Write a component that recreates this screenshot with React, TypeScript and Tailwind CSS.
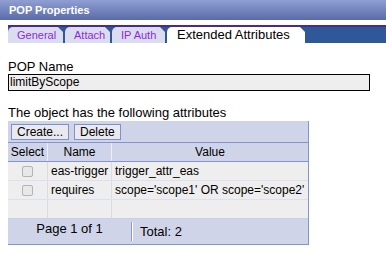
import React from 'react'

const tabNotch = '[clip-path:polygon(0_0,calc(100%-5px)_0,100%_5px,100%_100%,0_100%)]'

function Tab({ label, width, active }: { label: string; width: string; active?: boolean }) {
  return (
    <div
      className={`${width} ${tabNotch} h-[16px] rounded-tl-[5px] ${
        active
          ? 'bg-white text-black text-[13px] pl-[10px]'
          : 'bg-[#dcdcf0] text-[#8a2be2] text-[11px] pl-[9px]'
      } leading-[16px] whitespace-nowrap`}
    >
      {label}
    </div>
  )
}

function Checkbox() {
  return <div className="mx-auto mt-[4px] h-[11px] w-[11px] rounded-[2px] border border-[#b3b3b3] bg-[#e8e8e8]" />
}

const rows = [
  { name: 'eas-trigger', value: 'trigger_attr_eas' },
  { name: 'requires', value: "scope='scope1' OR scope='scope2'" },
]

export default function App() {
  return (
    <div className="h-[271px] w-[386px] overflow-hidden bg-white text-black font-['Liberation_Sans',Arial,sans-serif]">
      <div className="h-[20px] bg-gradient-to-b from-[#909fd3] to-[#5a6ba8] pl-[9px] text-[11px] font-bold leading-[20px] text-white">
        POP Properties
      </div>

      <div className="pl-[8px] pt-[5px]">
        <div className="h-[2px] bg-[#4a2b8a]" />
        <div className="flex h-[16px] gap-[2px] bg-[#2f5898]">
          <Tab label="General" width="w-[55px]" />
          <Tab label="Attach" width="w-[45px]" />
          <Tab label="IP Auth" width="w-[53px]" />
          <Tab label="Extended Attributes" width="w-[138px]" active />
        </div>

        <div className="mt-[16px] text-[13px] leading-[15px]">POP Name</div>
        <div className="h-[17px] w-[362px] border border-black bg-[#eeeeee] pl-[1px] text-[12px] leading-[15px]">
          limitByScope
        </div>

        <div className="mt-[14px] text-[13px] leading-[15px]">The object has the following attributes</div>

        <div className="mt-[1px] w-[301px] border-r border-b border-[#8393d6] text-[12px]">
          <div className="flex h-[22px] gap-[5px] border-b border-[#8393d6] bg-[#cfd4e8] pl-[3px] pt-[3px]">
            <div className="h-[16px] border border-[#7f92c6] bg-[#e9e9ef] px-[5px] leading-[14px]">Create...</div>
            <div className="h-[16px] border border-[#7f92c6] bg-[#e9e9ef] px-[5px] leading-[14px]">Delete</div>
          </div>

          <div className="grid h-[19px] grid-cols-[40px_64px_1fr] border-b border-[#8393d6] bg-[#cfd4e8] leading-[18px]">
            <div className="border-r border-[#eef0f8] text-center">Select</div>
            <div className="border-r border-[#eef0f8] text-center">Name</div>
            <div className="text-center">Value</div>
          </div>

          {rows.map((r) => (
            <div
              key={r.name}
              className="grid h-[19px] grid-cols-[40px_64px_1fr] border-b border-[#dde1ef] bg-[#eeeeee] leading-[18px]"
            >
              <div className="border-r border-[#d8dce8]">
                <Checkbox />
              </div>
              <div className="border-r border-[#d8dce8] pl-[3px] whitespace-nowrap">{r.name}</div>
              <div className="pl-[3px] whitespace-nowrap">{r.value}</div>
            </div>
          ))}
          <div className="grid h-[19px] grid-cols-[40px_64px_1fr] border-b border-[#c9cfe6] bg-[#eeeeee]">
            <div className="border-r border-[#d8dce8]" />
            <div className="border-r border-[#d8dce8]" />
            <div />
          </div>

          <div className="flex h-[25px] bg-[#cfd4e8] text-[13px] leading-[15px]">
            <div className="w-[123px] pt-[2px] text-center">Page 1 of 1</div>
            <div className="mt-[3px] h-[19px] w-[2px] border-l border-[#8a99c8] border-r border-r-white" />
            <div className="pl-[7px] pt-[5px]">Total: 2</div>
          </div>
        </div>
      </div>
    </div>
  )
}
